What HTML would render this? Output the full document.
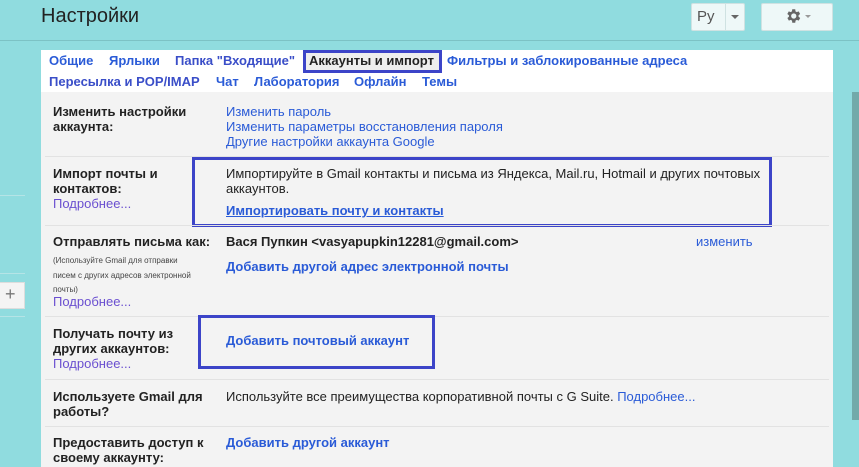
<!DOCTYPE html>
<html><head><meta charset="utf-8"><style>
*{margin:0;padding:0;box-sizing:border-box}
body{width:859px;height:467px;overflow:hidden;background:#90dcdf;font-family:"Liberation Sans","Noto Sans CJK SC",sans-serif;position:relative;font-size:13px;color:#222}
.a{position:absolute;white-space:nowrap}
.b{font-weight:bold}
.l{color:#2a5bd7}
.p{color:#6a4fd0}
.tab{color:#2a5bd7;font-weight:bold;font-size:13px}
.sep{position:absolute;left:45px;width:784px;height:1px;background:#e2e2e2}
.box{position:absolute;border:3px solid #3c44c8}
</style></head><body>
<div class="a" style="left:41px;top:5px;font-size:20px;color:#222">Настройки</div>
<div class="a" style="left:0;top:40px;width:859px;height:1px;background:#7cc2c5"></div>
<div class="a" style="left:691px;top:3px;width:54px;height:28px;background:#eef8f8;border:1px solid #cfe2e2;border-radius:2px"></div>
<div class="a" style="left:725px;top:3px;width:1px;height:28px;background:#cfe2e2"></div>
<div class="a" style="left:697px;top:8px;font-size:15px;color:#555">Ру</div>
<div class="a" style="left:731px;top:15px;border-left:4px solid transparent;border-right:4px solid transparent;border-top:4px solid #666"></div>
<div class="a" style="left:761px;top:3px;width:72px;height:28px;background:#eef8f8;border:1px solid #cfe2e2;border-radius:2px"></div>
<svg class="a" style="left:784px;top:7px" width="18" height="18" viewBox="0 0 24 24"><path fill="#666" d="M19.4 13a7.5 7.5 0 0 0 0-2l2.1-1.6-2-3.5-2.5 1a7 7 0 0 0-1.7-1L15 3h-4l-.4 2.9a7 7 0 0 0-1.7 1l-2.5-1-2 3.5L6.6 11a7.5 7.5 0 0 0 0 2l-2.1 1.6 2 3.5 2.5-1a7 7 0 0 0 1.7 1L11 21h4l.4-2.9a7 7 0 0 0 1.7-1l2.5 1 2-3.5zM13 15.5a3.5 3.5 0 1 1 0-7 3.5 3.5 0 0 1 0 7z"/></svg>
<div class="a" style="left:805px;top:15px;border-left:3.5px solid transparent;border-right:3.5px solid transparent;border-top:3.5px solid #999"></div>
<!-- sidebar -->
<div class="a" style="left:0;top:195px;width:25px;height:1px;background:#b5e4e6"></div>
<div class="a" style="left:0;top:273px;width:25px;height:1px;background:#b5e4e6"></div>
<div class="a" style="left:0;top:282px;width:25px;height:27px;background:#f4f4f4;border:1px solid #ddd;border-left:none"></div>
<div class="a" style="left:5px;top:284px;font-size:18px;color:#777">+</div>
<div class="a" style="left:0;top:316px;width:25px;height:1px;background:#b5e4e6"></div>
<!-- scrollbar -->
<div class="a" style="left:852px;top:92px;width:7px;height:328px;background:#72aaaa"></div>
<!-- panel -->
<div class="a" style="left:41px;top:50px;width:792px;height:42px;background:#fff"></div>
<div class="a" style="left:41px;top:92px;width:792px;height:375px;background:#f3f3f3"></div>
<div class="a" style="left:305px;top:52px;width:134px;height:19px;background:#eee"></div>
<div class="box" style="left:303px;top:50px;width:139px;height:23px"></div>
<div class="a tab" style="left:49px;top:53px">Общие</div>
<div class="a tab" style="left:109px;top:53px">Ярлыки</div>
<div class="a tab" style="left:175px;top:53px;color:#3a4ec8">Папка "Входящие"</div>
<div class="a tab" style="left:309px;top:53px;color:#222">Аккаунты и импорт</div>
<div class="a tab" style="left:447px;top:53px">Фильтры и заблокированные адреса</div>
<div class="a tab" style="left:49px;top:74px;color:#3a4ec8">Пересылка и POP/IMAP</div>
<div class="a tab" style="left:216px;top:74px">Чат</div>
<div class="a tab" style="left:254px;top:74px">Лаборатория</div>
<div class="a tab" style="left:354px;top:74px">Офлайн</div>
<div class="a tab" style="left:422px;top:74px">Темы</div>
<!-- row1 -->
<div class="a b" style="left:53px;top:104px;line-height:15px">Изменить настройки<br>аккаунта:</div>
<div class="a l" style="left:226px;top:104px;line-height:15px">Изменить пароль<br>Изменить параметры восстановления пароля<br>Другие настройки аккаунта Google</div>
<div class="sep" style="top:156px"></div>
<!-- row2 -->
<div class="a b" style="left:53px;top:166px;line-height:15px">Импорт почты и<br>контактов:</div>
<div class="a p" style="left:53px;top:196px">Подробнее...</div>
<div class="a" style="left:226px;top:166px;line-height:15px">Импортируйте в Gmail контакты и письма из Яндекса, Mail.ru, Hotmail и других почтовых<br>аккаунтов.</div>
<div class="a l b" style="left:226px;top:203px;text-decoration:underline">Импортировать почту и контакты</div>
<div class="box" style="left:192px;top:157px;width:580px;height:70px"></div>
<div class="sep" style="top:225px"></div>
<!-- row3 -->
<div class="a b" style="left:53px;top:234px">Отправлять письма как:</div>
<div class="a" style="left:53px;top:254px;font-size:8px;line-height:14.5px;color:#444">(Используйте Gmail для отправки<br>писем с других адресов электронной<br>почты)</div>
<div class="a p" style="left:53px;top:294px">Подробнее...</div>
<div class="a b" style="left:226px;top:234px">Вася Пупкин &lt;vasyapupkin12281@gmail.com&gt;</div>
<div class="a l" style="left:696px;top:234px">изменить</div>
<div class="a l b" style="left:226px;top:259px">Добавить другой адрес электронной почты</div>
<div class="sep" style="top:316px"></div>
<!-- row4 -->
<div class="a b" style="left:53px;top:326px;line-height:15px">Получать почту из<br>других аккаунтов:</div>
<div class="a p" style="left:53px;top:356px">Подробнее...</div>
<div class="a l b" style="left:226px;top:333px">Добавить почтовый аккаунт</div>
<div class="box" style="left:198px;top:315px;width:237px;height:54px"></div>
<div class="sep" style="top:379px"></div>
<!-- row5 -->
<div class="a b" style="left:53px;top:389px;line-height:15px">Используете Gmail для<br>работы?</div>
<div class="a" style="left:226px;top:389px">Используйте все преимущества корпоративной почты с G Suite. <span class="l">Подробнее...</span></div>
<div class="sep" style="top:426px"></div>
<!-- row6 -->
<div class="a b" style="left:53px;top:435px;line-height:15px">Предоставить доступ к<br>своему аккаунту:</div>
<div class="a l b" style="left:226px;top:435px">Добавить другой аккаунт</div>
</body></html>
